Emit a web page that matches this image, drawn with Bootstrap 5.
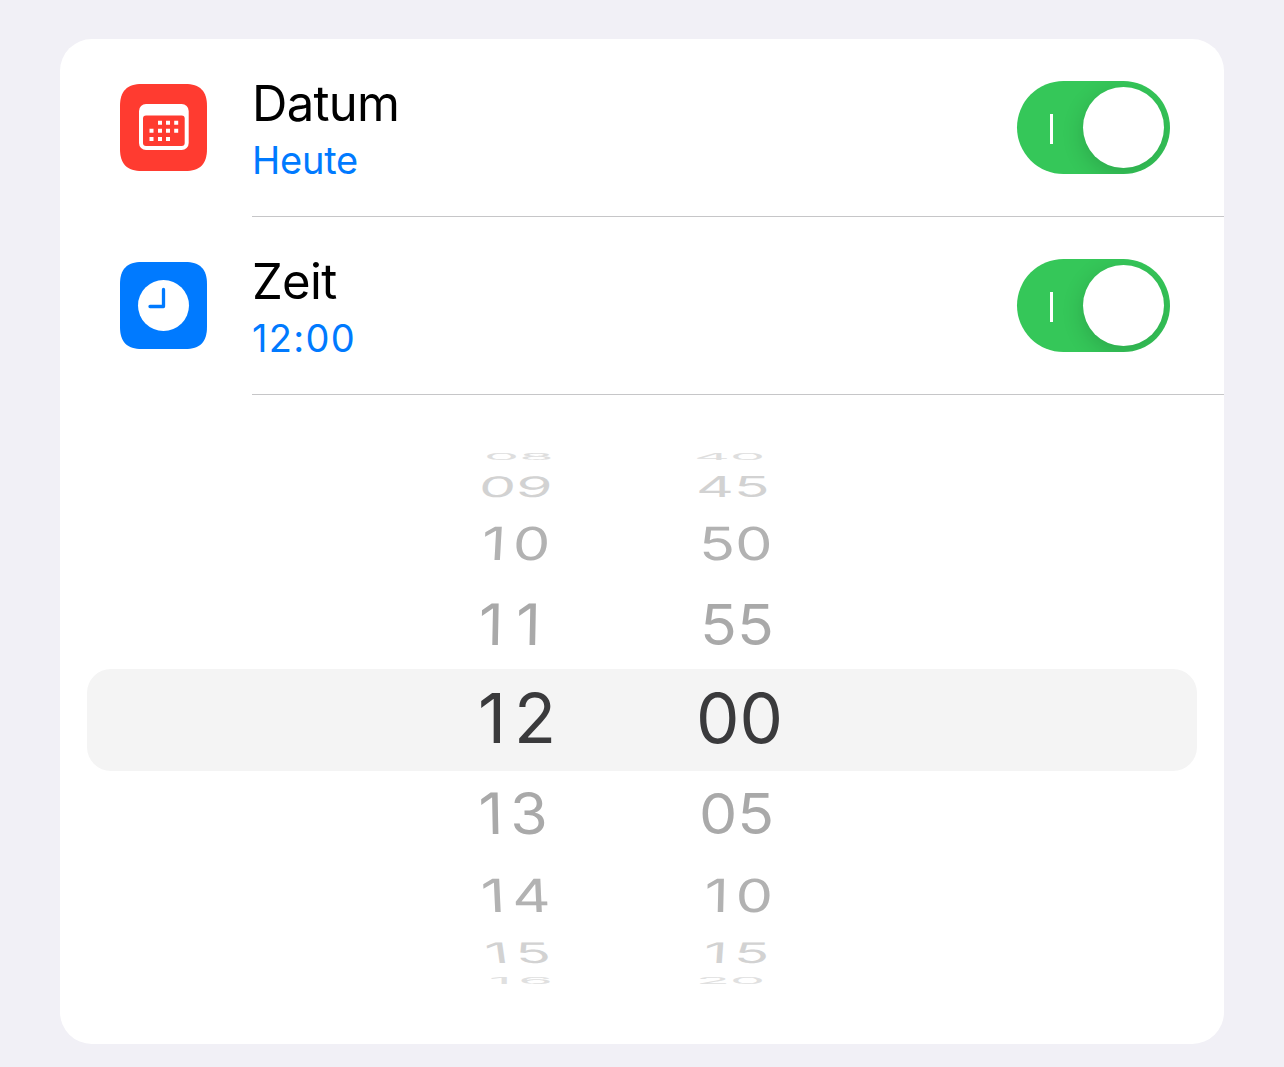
<!DOCTYPE html>
<html lang="de">
<head>
  <title>Datum und Zeit</title>
  <meta charset="UTF-8" />
  <meta name="viewport" content="width=device-width, initial-scale=1" />
  <link href="https://cdn.jsdelivr.net/npm/bootstrap@5.3.2/dist/css/bootstrap.min.css" rel="stylesheet">
  <style>
    body {
      background: #f1f0f6;
      font-family: Inter, "Liberation Sans", sans-serif;
      padding: 39px 60px 23px;
      height: 1067px;
      overflow: hidden;
    }
    .settings { border-radius: 32px; height: 1005px; }
    .setting { padding-left: 60px; }
    .setting-icon { width: 87px; height: 87px; margin: 0 45px 1px 0; }
    .setting-body { height: 178px; padding-right: 54px; border-bottom: 1px solid #c6c6c8; }
    .setting-title { font-size: 49px; line-height: 64px; letter-spacing: -.7px; color: #000; }
    .setting-value { font-size: 38px; line-height: 48px; letter-spacing: -.2px; color: #007aff; }
    .setting-clock { letter-spacing: 1.3px; }

    /* toggle */
    .toggle { width: 153px; height: 93px; padding: 0 6px 0 33px; background: #35c759; }
    .toggle-bar { width: 3px; height: 30px; margin-top: 2px; background: #fff; }
    .toggle-knob { width: 81px; height: 81px; box-shadow: 0 6px 22px rgba(0, 0, 0, .16); }

    /* wheel picker, rows get flatter towards the edges */
    .picker { padding: 54px 27px 0; font-size: 69px; line-height: 1; color: #a9a9a9; }
    .wheel { display: grid; grid-template-columns: 219px 110px; padding-left: 391px; align-items: center; }
    .wheel > div { height: 0; display: flex; align-items: center; }
    .wheel > div:first-child { --x: var(--hx, 0); --k: var(--hk, 0deg); }
    .wheel > div:last-child { --x: var(--mx, 0); --k: var(--mk, 0deg); }
    .wheel span { display: block; transform-origin: 0 50%; transform: translateX(var(--x)) scale(var(--sx), var(--sy)) skewX(var(--k)); }
    .one { letter-spacing: 8px; }
    .ones { letter-spacing: 14px; }
    .up4 { height: 16px; --sx: .81; --sy: .12; --hx: 6px; --mx: -3px; color: #dedede; }
    .up3 { height: 42px; --sx: .85; --sy: .41; --hx: 1px; --mx: -1px; --hk: -3deg; color: #d2d2d2; }
    .up2 { height: 73px; --sx: .86; --sy: .66; --hx: 4px; --mx: 2px; --hk: -2.5deg; --mk: 1deg; color: #b2b2b2; }
    .up1 { height: 89px; --sx: .88; --sy: .825; --hx: 1px; --mx: 3px; --hk: -1deg; }
    .wheel-sel { height: 102px; border-radius: 24px; background: #f4f4f4; color: #3a3a3c; --sx: 1; --sy: 1; --mx: -1px; padding-bottom: 3px; }
    .dn1 { height: 85px; --sx: .88; --sy: .825; --hx: .5px; --mx: 2px; --hk: 1deg; }
    .dn2 { height: 78px; --sx: .86; --sy: .66; --hx: 3px; --mx: 7.5px; --hk: 2deg; --mk: -1deg; color: #b2b2b2; }
    .dn3 { height: 37px; --sx: .84; --sy: .41; --hx: 7px; --mx: 7px; --hk: 4deg; --mk: -2deg; color: #d2d2d2; }
    .dn4 { height: 20px; --sx: .81; --sy: .12; --hx: 11px; --mx: -1px; color: #e0e0e0; }
  </style>
</head>
<body>
  <div class="settings bg-white overflow-hidden">
    <div class="setting d-flex align-items-center">
      <svg class="setting-icon flex-shrink-0" viewBox="0 0 87 87">
        <path fill="#ff3b30" d="M22 0H65C80 0 87 7 87 22V65C87 80 80 87 65 87H22C7 87 0 80 0 65V22C0 7 7 0 22 0Z"/>
        <rect x="19" y="20" width="49.700" height="46" rx="7" fill="#fff"/>
        <rect x="23" y="31.500" width="41.700" height="30.500" rx="3" fill="#ff3b30"/>
        <path fill="#fff" d="M38 36.800h4v4h-4zm8 0h4v4h-4zm8.200 0h4v4h-4zM29.500 44.800h4v4h-4zm8.500 0h4v4h-4zm8 0h4v4h-4zm8.200 0h4v4h-4zM29.500 53h4v4h-4zm8.500 0h4v4h-4zm8 0h4v4h-4z"/>
      </svg>
      <div class="setting-body flex-grow-1 d-flex align-items-center justify-content-between">
        <div>
          <div class="setting-title">Datum</div>
          <div class="setting-value">Heute</div>
        </div>
        <div class="toggle rounded-pill d-flex align-items-center justify-content-between overflow-hidden" role="switch" aria-checked="true">
          <div class="toggle-bar"></div>
          <div class="toggle-knob rounded-circle bg-white"></div>
        </div>
      </div>
    </div>

    <div class="setting d-flex align-items-center">
      <svg class="setting-icon flex-shrink-0" viewBox="0 0 87 87">
        <path fill="#007aff" d="M22 0H65C80 0 87 7 87 22V65C87 80 80 87 65 87H22C7 87 0 80 0 65V22C0 7 7 0 22 0Z"/>
        <circle cx="43.500" cy="43.500" r="25.500" fill="#fff"/>
        <path d="M43.500 27.500V44.500H30" fill="none" stroke="#007aff" stroke-width="3.300" stroke-linecap="round" stroke-linejoin="round"/>
      </svg>
      <div class="setting-body flex-grow-1 d-flex align-items-center justify-content-between">
        <div>
          <div class="setting-title">Zeit</div>
          <div class="setting-value setting-clock">12:00</div>
        </div>
        <div class="toggle rounded-pill d-flex align-items-center justify-content-between overflow-hidden" role="switch" aria-checked="true">
          <div class="toggle-bar"></div>
          <div class="toggle-knob rounded-circle bg-white"></div>
        </div>
      </div>
    </div>

    <div class="picker">
      <div class="wheel up4"><div><span>08</span></div><div><span>40</span></div></div>
      <div class="wheel up3"><div><span>09</span></div><div><span>45</span></div></div>
      <div class="wheel up2"><div><span class="one">10</span></div><div><span>50</span></div></div>
      <div class="wheel up1"><div><span class="ones">11</span></div><div><span>55</span></div></div>
      <div class="wheel wheel-sel"><div><span class="one">12</span></div><div><span>00</span></div></div>
      <div class="wheel dn1"><div><span class="one">13</span></div><div><span>05</span></div></div>
      <div class="wheel dn2"><div><span class="one">14</span></div><div><span class="one">10</span></div></div>
      <div class="wheel dn3"><div><span class="one">15</span></div><div><span class="one">15</span></div></div>
      <div class="wheel dn4"><div><span class="one">16</span></div><div><span>20</span></div></div>
    </div>
  </div>

  <script src="https://cdn.jsdelivr.net/npm/bootstrap@5.3.2/dist/js/bootstrap.bundle.min.js"></script>
</body>
</html>
